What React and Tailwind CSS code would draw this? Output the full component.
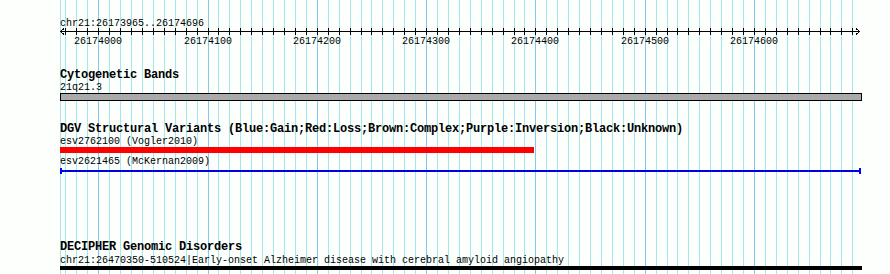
import React from "react";

const START = 26173965;
const END = 26174696;
const LEFT = 60;
const SCALE = 800 / 732;

const toX = (pos) => LEFT + Math.round((pos - START) * SCALE);

const gridPositions = [];
for (let p = 26173970; p <= END; p += 10) gridPositions.push(p);

const majorLabels = [26174000, 26174100, 26174200, 26174300, 26174400, 26174500, 26174600];

function Grid() {
  return (
    <svg className="absolute inset-0" width="890" height="274" shapeRendering="crispEdges">
      <line x1={LEFT + 0.5} y1="0" x2={LEFT + 0.5} y2="274" stroke="#a4e8ee" strokeWidth="1" />
      {gridPositions.map((p) => (
        <line
          key={p}
          x1={toX(p) + 0.5}
          y1="0"
          x2={toX(p) + 0.5}
          y2="274"
          stroke={p % 100 === 0 ? "#84c8ee" : "#a4e8ee"}
          strokeWidth="1"
        />
      ))}
    </svg>
  );
}

function Ruler() {
  return (
    <div className="relative mt-[-4px] h-[22px]">
      <svg className="absolute left-0 top-0" width="802" height="22" shapeRendering="crispEdges">
        <line x1="0" y1="5.5" x2="800" y2="5.5" stroke="#000" strokeWidth="1" />
        <polyline points="4,2.5 0.5,5.5 4,8.5" fill="none" stroke="#000" strokeWidth="1" />
        <polyline points="796,2.5 799.5,5.5 796,8.5" fill="none" stroke="#000" strokeWidth="1" />
        {gridPositions.map((p) => (
          <line key={p} x1={toX(p) - LEFT + 0.5} y1="2" x2={toX(p) - LEFT + 0.5} y2="9" stroke="#000" strokeWidth="1" />
        ))}
      </svg>
      {majorLabels.map((p) => (
        <span
          key={p}
          className="absolute top-[9px] h-[13px] leading-[13px] text-[10px]"
          style={{ left: toX(p) - LEFT - 24 }}
        >
          {p}
        </span>
      ))}
    </div>
  );
}

export default function App() {
  return (
    <div className="relative w-[890px] h-[274px] overflow-hidden bg-[#fcfffc] text-black font-['Liberation_Mono',monospace]">
      <Grid />
      <div className="relative ml-[60px] w-[802px] pt-[17px]">
        <div className="h-[13px] leading-[13px] text-[10px] whitespace-nowrap">chr21:26173965..26174696</div>
        <Ruler />

        {/* Cytogenetic Bands */}
        <div className="mt-[21px] h-[12px] leading-[13px] text-[12px] font-bold tracking-[-0.2px] whitespace-nowrap">
          Cytogenetic Bands
        </div>
        <div className="h-[12px] leading-[13px] text-[10px] whitespace-nowrap">21q21.3</div>
        <div className="h-[8px] border border-black bg-[#aaaaaa]" />

        {/* DGV */}
        <div className="mt-[22px] h-[12px] leading-[13px] text-[12px] font-bold tracking-[-0.2px] whitespace-nowrap">
          DGV Structural Variants (Blue:Gain;Red:Loss;Brown:Complex;Purple:Inversion;Black:Unknown)
        </div>
        <div className="h-[12px] leading-[13px] text-[10px] whitespace-nowrap">esv2762100 (Vogler2010)</div>
        <div className="h-[6px] w-[474px] bg-[#ff0000]" />
        <div className="mt-[2px] h-[13px] leading-[13px] text-[10px] whitespace-nowrap">esv2621465 (McKernan2009)</div>
        <div className="flex h-[6px] w-[801px] items-center">
          <div className="h-[6px] w-[2px] bg-[#0000ff]" />
          <div className="h-[2px] flex-1 bg-[#0000e0]" />
          <div className="h-[6px] w-[2px] bg-[#0000ff]" />
        </div>

        {/* DECIPHER */}
        <div className="mt-[67px] h-[13px] leading-[13px] text-[12px] font-bold tracking-[-0.2px] whitespace-nowrap">
          DECIPHER Genomic Disorders
        </div>
        <div className="h-[12px] leading-[13px] text-[10px] whitespace-nowrap">
          chr21:26470350-510524|Early-onset Alzheimer disease with cerebral amyloid angiopathy
        </div>
        <div className="h-[4px] bg-black" />
      </div>
    </div>
  );
}
